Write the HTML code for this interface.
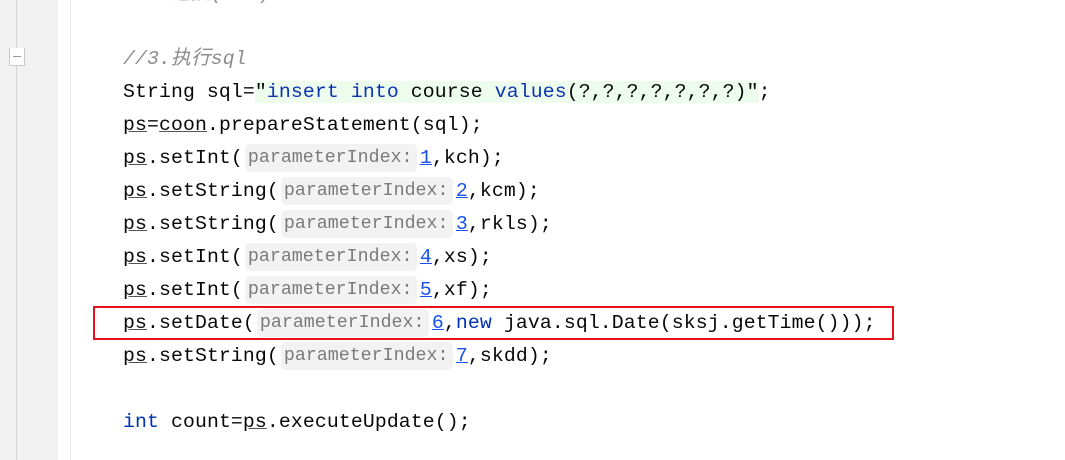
<!DOCTYPE html>
<html><head><meta charset="utf-8"><style>
body{margin:0;width:1065px;height:460px;background:#fff;position:relative;overflow:hidden;font-family:"Liberation Mono",monospace;}
.g{position:absolute;left:0;top:0;width:58px;height:460px;background:#f2f2f2;}
.vl{position:absolute;left:16px;top:0;width:1px;height:460px;background:#d4d4d4;}
.vl2{position:absolute;left:70px;top:0;width:1px;height:460px;background:#ececec;}
.fold{position:absolute;left:9px;top:48px;width:14px;height:17px;background:#fff;border:1px solid #c8c8c8;border-top:none;}
.L{position:absolute;left:123px;height:33px;line-height:33px;font-size:19.8px;color:#080808;white-space:pre;letter-spacing:0.12px;}
.c{color:#8c8c8c;font-style:italic}
.s{color:#0a34b0}
.k{color:#0033b3}
.n{color:#1750eb;text-decoration:underline}
.u{text-decoration:underline;text-decoration-color:#555}
.h{display:inline-block;vertical-align:top;margin:2px 3px 0 2px;height:28px;line-height:28px;width:172px;background:#f2f2f2;border-radius:5px;color:#7a7a7a;font-family:"Liberation Mono",monospace;font-size:18.3px;text-indent:3px;letter-spacing:0px;overflow:hidden;}
.str{background:#edfcec}
.red{position:absolute;left:93px;top:306px;width:797px;height:30px;border:2px solid #e8101a;}
</style></head><body>
<div class="g"></div><div class="vl"></div><div class="vl2"></div>
<div class="fold"><div style="position:absolute;left:3px;top:8px;width:8px;height:1px;background:#999"></div></div>
<div class="L c" style="top:-22px">//2.连接(...)</div>
<div class="L c" style="top:43px">//3.执行sql</div>
<div class="L" style="top:76px">String sql=<span class="str">"<span class="s">insert into</span> course <span class="s">values</span>(?,?,?,?,?,?,?)"</span>;</div>
<div class="L" style="top:109px"><span class="u">ps</span>=<span class="u">coon</span>.prepareStatement(sql);</div>
<div class="L" style="top:142px"><span class="u">ps</span>.setInt(<span class="h">parameterIndex:</span><span class="n">1</span>,kch);</div>
<div class="L" style="top:175px"><span class="u">ps</span>.setString(<span class="h">parameterIndex:</span><span class="n">2</span>,kcm);</div>
<div class="L" style="top:208px"><span class="u">ps</span>.setString(<span class="h">parameterIndex:</span><span class="n">3</span>,rkls);</div>
<div class="L" style="top:241px"><span class="u">ps</span>.setInt(<span class="h">parameterIndex:</span><span class="n">4</span>,xs);</div>
<div class="L" style="top:274px"><span class="u">ps</span>.setInt(<span class="h">parameterIndex:</span><span class="n">5</span>,xf);</div>
<div class="L" style="top:307px"><span class="u">ps</span>.setDate(<span class="h">parameterIndex:</span><span class="n">6</span>,<span class="k">new</span> java.sql.Date(sksj.getTime()));</div>
<div class="L" style="top:340px"><span class="u">ps</span>.setString(<span class="h">parameterIndex:</span><span class="n">7</span>,skdd);</div>
<div class="L" style="top:406px"><span class="k">int</span> count=<span class="u">ps</span>.executeUpdate();</div>
<div class="red"></div>
</body></html>
